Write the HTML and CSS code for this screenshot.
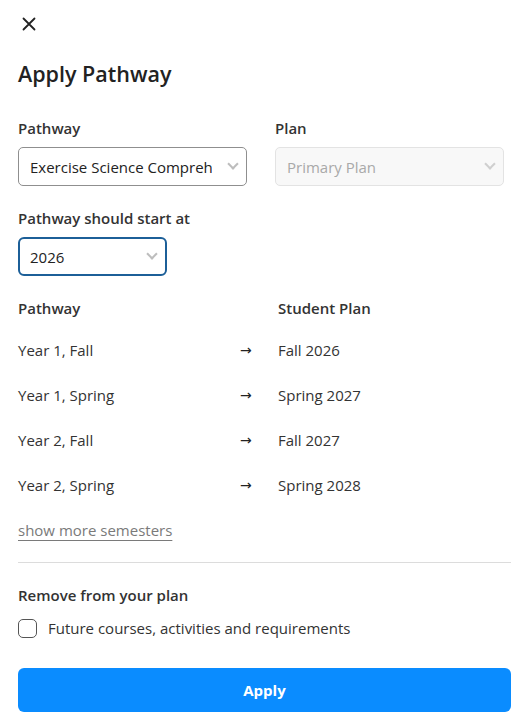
FILE: index.html
```html
<!DOCTYPE html>
<html lang="en">
<head>
  <meta charset="UTF-8" />
  <title>Apply Pathway</title>
  <meta name="viewport" content="width=device-width, initial-scale=1.0" />
  <link rel="stylesheet" href="styles.css">
</head>
<body>
  <div class="panel">
    <button class="close" aria-label="Close">
      <svg width="16" height="16" viewBox="0 0 16 16"><path d="M2.5 2.5L13.5 13.5M13.5 2.5L2.5 13.5" stroke="#222" stroke-width="1.8" stroke-linecap="round"/></svg>
    </button>

    <h1>Apply Pathway</h1>

    <div class="fields">
      <div class="field">
        <label>Pathway</label>
        <div class="select">
          <span class="value">Exercise Science Comprehensive</span>
          <span class="chevron"></span>
        </div>
      </div>
      <div class="field">
        <label>Plan</label>
        <div class="select disabled">
          <span class="value">Primary Plan</span>
          <span class="chevron"></span>
        </div>
      </div>
    </div>

    <div class="field start">
      <label>Pathway should start at</label>
      <div class="select focused">
        <span class="value">2026</span>
        <span class="chevron"></span>
      </div>
    </div>

    <div class="mapping">
      <div class="head">Pathway</div>
      <div></div>
      <div class="head">Student Plan</div>

      <div>Year 1, Fall</div><div class="arrow">&rarr;</div><div>Fall 2026</div>
      <div>Year 1, Spring</div><div class="arrow">&rarr;</div><div>Spring 2027</div>
      <div>Year 2, Fall</div><div class="arrow">&rarr;</div><div>Fall 2027</div>
      <div>Year 2, Spring</div><div class="arrow">&rarr;</div><div>Spring 2028</div>
    </div>

    <a class="more" href="#">show more semesters</a>

    <hr>

    <div class="remove">
      <label class="title">Remove from your plan</label>
      <label class="check"><span class="box"></span>Future courses, activities and requirements</label>
    </div>

    <button class="apply">Apply</button>
  </div>
</body>
</html>
```

FILE: styles.css
```css
* {
  box-sizing: border-box;
}

body {
  margin: 0;
  font-family: "Open Sans", "Noto Sans", sans-serif;
  font-size: 15px;
  color: #333;
  background: #fff;
}

.panel {
  padding: 16px 9px 0 18px;
  display: flex;
  flex-direction: column;
}

.close {
  border: none;
  background: none;
  padding: 0;
  margin-left: 3px;
  width: 16px;
  height: 16px;
  cursor: pointer;
}

.close svg {
  display: block;
}

h1 {
  margin: 27px 0 0;
  font-size: 21.5px;
  font-weight: 600;
  color: #222;
  line-height: 30px;
}

label {
  display: block;
  font-weight: 600;
  color: #333;
}

.fields {
  display: grid;
  grid-template-columns: 229px 229px;
  gap: 28px;
  margin-top: 29px;
}

.field label {
  line-height: 20px;
  margin-bottom: 9px;
}

.select {
  height: 39px;
  border: 1px solid #8f8f8f;
  border-radius: 5px;
  display: flex;
  align-items: center;
  padding: 0 9px 0 11px;
  color: #222;
}

/* long names are simply clipped, like a native select */
.select .value {
  flex: 1;
  white-space: nowrap;
  overflow: hidden;
  margin-right: 17px;
}

.chevron {
  width: 8px;
  height: 8px;
  border-right: 2px solid #bdbdbd;
  border-bottom: 2px solid #bdbdbd;
  transform: rotate(45deg);
  margin-top: -5px;
}

.select.disabled {
  border-color: #e3e3e3;
  background: #f8f8f8;
  color: #a9a9a9;
}

.select.disabled .chevron {
  border-color: #cfcfcf;
}

.start {
  margin-top: 22px;
}

.select.focused {
  width: 149px;
  border: 2px solid #1c5f98;
  border-radius: 6px;
  padding-left: 10px;
}

.mapping {
  display: grid;
  grid-template-columns: 222px 38px 1fr;
  margin-top: 22px;
  row-gap: 25px;
  line-height: 20px;
}

.mapping .head {
  font-weight: 600;
  margin-bottom: -3px;
}

.arrow {
  color: #222;
  font-family: "DejaVu Sans", sans-serif;
  font-size: 14px;
}

.more {
  margin-top: 25px;
  color: #7a7a7a;
  text-decoration: underline;
  text-underline-offset: 4px;
  align-self: flex-start;
  line-height: 20px;
}

hr {
  margin: 22px 0 0;
  border: none;
  border-top: 1px solid #dcdcdc;
}

.remove .title {
  margin-top: 22px;
  line-height: 20px;
}

.check {
  display: flex;
  align-items: center;
  gap: 11px;
  margin-top: 13px;
  font-weight: 400;
  line-height: 20px;
}

.box {
  width: 19px;
  height: 19px;
  border: 1.5px solid #555;
  border-radius: 5px;
}

.apply {
  margin-top: 30px;
  height: 44px;
  border: none;
  border-radius: 6px;
  background: #0a8cff;
  color: #fff;
  font-family: inherit;
  font-size: 15px;
  font-weight: 700;
  cursor: pointer;
}
```
